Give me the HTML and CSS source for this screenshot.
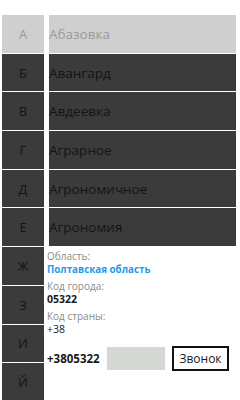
FILE: index.html
```html
<!DOCTYPE html>
<html>
<head>
<meta charset="utf-8">
<title>Города</title>
<link rel="stylesheet" href="styles.css">
</head>
<body>
<div class="page">
  <div class="letters">
    <div class="tile tile-active">А</div>
    <div class="tile">Б</div>
    <div class="tile">В</div>
    <div class="tile">Г</div>
    <div class="tile">Д</div>
    <div class="tile">Е</div>
    <div class="tile">Ж</div>
    <div class="tile">З</div>
    <div class="tile">И</div>
    <div class="tile">Й</div>
  </div>
  <div class="main">
    <div class="towns">
      <div class="town town-active">Абазовка</div>
      <div class="town">Авангард</div>
      <div class="town">Авдеевка</div>
      <div class="town">Аграрное</div>
      <div class="town">Агрономичное</div>
      <div class="town">Агрономия</div>
    </div>
    <div class="details">
      <div class="field">
        <div class="label">Область:</div>
        <div class="value region">Полтавская область</div>
      </div>
      <div class="field">
        <div class="label">Код города:</div>
        <div class="value">05322</div>
      </div>
      <div class="field">
        <div class="label">Код страны:</div>
        <div class="value plain">+38</div>
      </div>
      <div class="dial">
        <span class="number">+3805322</span>
        <span class="input"></span>
        <span class="call">Звонок</span>
      </div>
    </div>
  </div>
</div>
</body>
</html>
```

FILE: styles.css
```css
body {
   margin: 0;
   background-color: white;
   font-family: "Open Sans", "Noto Sans", sans-serif;
   color: #1a1a1a;
}

.page {
   display: flex;
   gap: 5px;
   padding: 15px 4px 0 2px;
   height: 400px;
   box-sizing: border-box;
   overflow: hidden;
}

.letters {
   display: flex;
   flex-direction: column;
   gap: 1px;
   width: 42px;
   flex-shrink: 0;
}

.tile {
   height: 37.7px;
   flex-shrink: 0;
   background-color: #3b3b3b;
   color: #141414;
   font-size: 13px;
   display: flex;
   align-items: center;
   justify-content: center;
}

.tile-active {
   background-color: #cfcfcf;
   color: #9a9a9a;
}

.main {
   flex: 1;
}

.towns {
   display: flex;
   flex-direction: column;
   gap: 1px;
}

.town {
   height: 37.7px;
   background-color: #3b3b3b;
   color: #141414;
   font-size: 13.5px;
   display: flex;
   align-items: center;
}

.town-active {
   background-color: #cfcfcf;
   color: #9a9a9a;
}

.details {
   padding: 4px 0 0 0;
   margin-left: -2px;
   font-size: 10px;
   line-height: 13px;
}

.field {
   margin-bottom: 4px;
}

.label {
   color: #8a8a8a;
}

.value {
   font-weight: bold;
   font-size: 10.5px;
   color: #1a1a1a;
}

.value.plain {
   font-weight: normal;
}

.value.region {
   color: #1e9be6;
   font-size: 9.8px;
}

.dial {
   display: flex;
   align-items: center;
   margin-top: 10px;
}

.number {
   font-weight: bold;
   font-size: 11.5px;
   width: 60px;
}

.input {
   width: 58px;
   height: 23px;
   background-color: #d6d8d6;
}

.call {
   margin-left: 7px;
   width: 53px;
   height: 21px;
   border: 2px solid #111;
   font-size: 12px;
   display: flex;
   align-items: center;
   justify-content: center;
}
```
